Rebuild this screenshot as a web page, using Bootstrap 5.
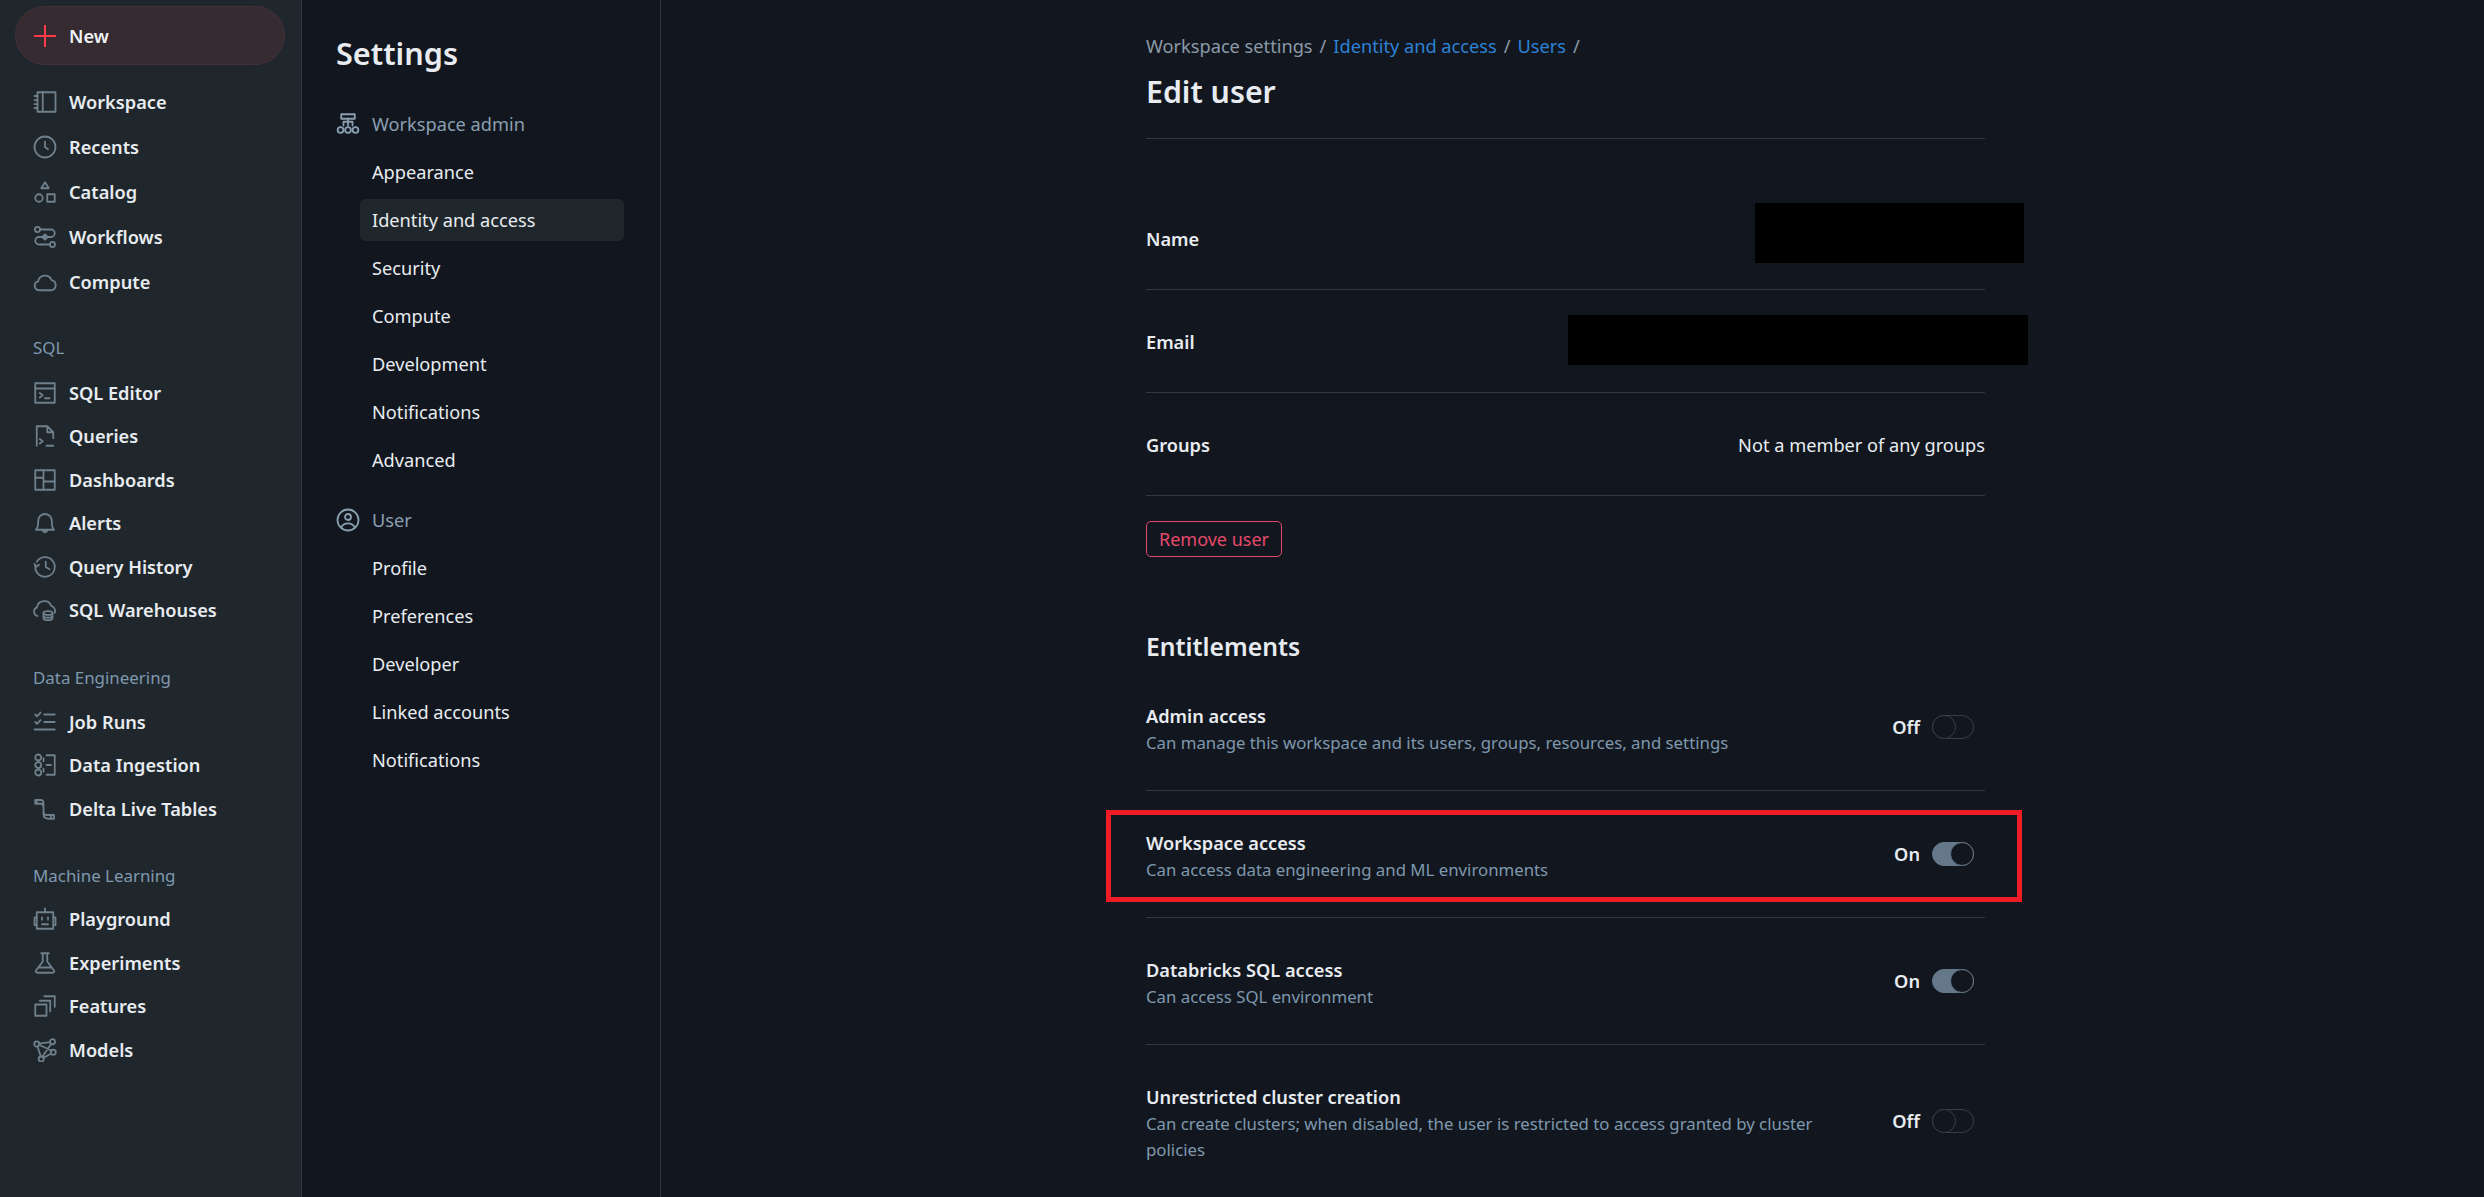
<!DOCTYPE html>
<html lang="en"><head><meta charset="utf-8"><title>Edit user</title>
<link href="https://cdn.jsdelivr.net/npm/bootstrap@5.3.0/dist/css/bootstrap.min.css" rel="stylesheet">
<style>
html,body{height:100%;overflow:hidden}
body{background:#12171f;color:#e8ecf0;font-family:"Noto Sans","Open Sans",sans-serif;font-size:18.2px;line-height:26px}
.shell{height:1197px}
.side{width:302px;flex:none;background:#1f272d;padding:6px 16px 0 15px;border-right:1px solid #2f3941}
.newbtn{height:59px;border-radius:30px;background:#352b30;border:1px solid #43313a;padding-left:17px;gap:12px;font-weight:600;color:#f0f3f6}
.navgroup{margin-top:14.5px}
.navrow{height:45px;padding-left:18px;gap:12px;font-weight:600;color:#e8ecf0;text-decoration:none}
.navrow.tight{height:43.5px}
.navrow svg,.sethead svg{width:24px;height:24px;flex:none;fill:none;stroke:#6f7f8b;stroke-width:1.2;stroke-linecap:round;stroke-linejoin:round}
.navlabel{height:24px;line-height:24px;margin:34px 0 10px 18px;color:#7f98ad;font-size:16.9px}
.navlabel.first{margin:31.5px 0 11px 18px}
.navlabel.last{margin-top:33px}
.setpanel{width:359px;flex:none;border-right:1px solid #2f3941;padding:31px 36px 0 34px}
.settitle{font-size:30.6px;line-height:44px;font-weight:600;margin:0 0 25px}
.sethead{height:48px;gap:12px;color:#8a9fb1}
.sethead svg{stroke:#8a9fb1}
.setgroup{margin-bottom:12px}
.setlist{gap:6px;padding:3px 0}
.setitem{display:block;height:42px;line-height:42px;margin-left:24px;padding-left:12px;border-radius:6px;color:#e8ecf0;text-decoration:none}
.setitem.cur{background:#1f272d}
.pagebody{width:839px;margin-left:485px;padding-top:33px;flex:none}
.crumbs{gap:7px;color:#8b9aa7;height:26px;white-space:nowrap}
.crumbs .crumblink{color:#2d81d6;text-decoration:none}
.pagetitle{font-size:30.3px;line-height:44px;font-weight:600;margin:11px 0 0;padding-bottom:24px;border-bottom:1px solid #2f3941}
.inforow{height:103px;border-bottom:1px solid #2f3941;padding-top:2px}
.inforow b{font-weight:600}
.removebtn{--bs-btn-color:#e5496b;--bs-btn-border-color:#e5496b;--bs-btn-font-size:18px;--bs-btn-line-height:24px;--bs-btn-padding-y:5px;--bs-btn-padding-x:8px;--bs-btn-border-radius:5px;margin-top:25px;height:36px;width:136px;white-space:nowrap}
.enttitle{font-size:24.7px;line-height:30px;font-weight:600;margin:75px 0 2px}
.entrow{padding:40px 11px 34px 0;border-bottom:1px solid #2f3941}
.entrow strong{display:block;font-weight:600;margin:-1px 0 1px}
.entdesc{color:#7f98ad;font-size:16.8px;display:block;max-width:700px}
.tglwrap{gap:12px;font-weight:600;flex:none;margin-bottom:6px}
.tgl{display:block;position:relative;width:42px;height:24px;border-radius:12px;border:1px solid #33404a}
.tgl::after{content:"";position:absolute;left:-1px;top:-1px;width:24px;height:24px;border-radius:50%;border:1px solid #33404a;background:#12171f}
.tgl.on{background:#64788a;border-color:#64788a}
.tgl.on::after{left:auto;right:-1px;border-color:#64788a;border-width:1.5px}
.mask{position:absolute;background:#000}
.mask.m1{left:1755px;top:203px;width:269px;height:60px}
.mask.m2{left:1568px;top:315px;width:460px;height:50px}
.redbox{position:absolute;left:1106px;top:810px;width:916px;height:92px;border:5px solid #ee1c25}
</style></head><body>
<div class="shell d-flex position-relative">
<aside class="side">
<a class="newbtn d-flex align-items-center text-decoration-none"><svg width="24" height="24" viewBox="0 0 24 24" fill="none" stroke="#ff3b47" stroke-width="2"><path d="M12 1v22M1 12h22"/></svg><span>New</span></a>
<div class="navgroup">
<a class="navrow d-flex align-items-center"><svg viewBox="0 0 16 16"><rect x="3" y="1.500" width="12" height="13"/><path d="M6.500 1.500v13M1 4h2M1 6.700h2M1 9.400h2M1 12h2"/></svg>Workspace</a>
<a class="navrow d-flex align-items-center"><svg viewBox="0 0 16 16"><circle cx="8" cy="8" r="7"/><path d="M8 4.500v3.500l2 1.500"/></svg>Recents</a>
<a class="navrow d-flex align-items-center"><svg viewBox="0 0 16 16"><path d="M8 1.500l2.500 4h-5z"/><circle cx="4" cy="12" r="2.500"/><rect x="9.500" y="9.500" width="5" height="5"/></svg>Catalog</a>
<a class="navrow d-flex align-items-center"><svg viewBox="0 0 16 16"><circle cx="3" cy="3" r="1.700"/><circle cx="13" cy="13" r="1.700"/><path d="M4.700 3H12a2.500 2.500 0 0 1 0 5H4a2.500 2.500 0 0 0 0 5h7.300"/><path d="M8 6.200L9.800 8 8 9.800 6.200 8z"/></svg>Workflows</a>
<a class="navrow d-flex align-items-center"><svg viewBox="0 0 16 16"><path d="M4 13.500a3 3 0 0 1-.6-5.900 4.700 4.700 0 0 1 9-.9 3.500 3.500 0 0 1 .1 6.800z"/></svg>Compute</a>
</div>
<div class="navlabel first">SQL</div>
<a class="navrow tight d-flex align-items-center"><svg viewBox="0 0 16 16"><rect x="1.500" y="1.500" width="13" height="13"/><path d="M1.500 5h13M4.500 8l2 1.500-2 1.500M8 11.500h3"/></svg>SQL Editor</a>
<a class="navrow tight d-flex align-items-center"><svg viewBox="0 0 16 16"><path d="M2.500 14.500v-13h7l4 4v4M9.500 1.500v4h4M4.500 10l2 1.500-2 1.500M9 14.500h4.500"/></svg>Queries</a>
<a class="navrow tight d-flex align-items-center"><svg viewBox="0 0 16 16"><rect x="1.500" y="1.500" width="13" height="13"/><path d="M7 1.500v13M7 9h7.500M1.500 6.500H7"/></svg>Dashboards</a>
<a class="navrow tight d-flex align-items-center"><svg viewBox="0 0 16 16"><path d="M2 12.500c1.500-1.500 1.500-3 1.500-6a4.500 4.500 0 0 1 9 0c0 3 0 4.500 1.500 6zM6.500 12.500a1.500 1.500 0 0 0 3 0"/></svg>Alerts</a>
<a class="navrow tight d-flex align-items-center"><svg viewBox="0 0 16 16"><path d="M2.500 4.500a6.500 6.500 0 1 1-1 3.500M1 6l1 2 2-1.500M8.500 4.500V8l2.500 1.500"/></svg>Query History</a>
<a class="navrow tight d-flex align-items-center"><svg viewBox="0 0 16 16"><path d="M3 12a3 3 0 0 1-.4-5.700 5 5 0 0 1 9.600-1 3.500 3.500 0 0 1 2.300 4.500"/><ellipse cx="10" cy="10" rx="3" ry="1.300"/><path d="M7 10v3.500c0 1.700 6 1.700 6 0V10M7 12c0 1.500 6 1.500 6 0"/></svg>SQL Warehouses</a>
<div class="navlabel">Data Engineering</div>
<a class="navrow tight d-flex align-items-center"><svg viewBox="0 0 16 16"><path d="M1.500 3l1.200 1.200 2.300-2.500M1.500 8l1.200 1.200L5 6.700M7.500 3h7M7.500 8h7M1 13h13.500"/></svg>Job Runs</a>
<a class="navrow tight d-flex align-items-center"><svg viewBox="0 0 16 16"><circle cx="3.500" cy="3" r="2"/><circle cx="3.500" cy="8" r="2"/><circle cx="3.500" cy="13" r="2"/><path d="M9 1.500h5.500v13H9M9 8h3M7 3.500v2M7 10.500v2"/></svg>Data Ingestion</a>
<a class="navrow tight d-flex align-items-center"><svg viewBox="0 0 16 16"><path d="M1.500 2h3.500c1.500 0 2 .8 2 2.200v5.600c0 1.400.5 2.200 2 2.200h5v2.500h-3.500c-1.500 0-3.500-.5-3.500-3V6.500c0-1.500-.5-2-2-2H1.500zM2.500 2v2.500M12 12v2.500"/></svg>Delta Live Tables</a>
<div class="navlabel last">Machine Learning</div>
<a class="navrow tight d-flex align-items-center"><svg viewBox="0 0 16 16"><rect x="2.500" y="3.500" width="11" height="11"/><path d="M8 1v2.500M2.500 7H1v5h1.500M13.500 7H15v5h-1.500M6 7v1.500M10 7v1.500M6 11.500h4"/></svg>Playground</a>
<a class="navrow tight d-flex align-items-center"><svg viewBox="0 0 16 16"><path d="M5.500 1.500h5M6.500 1.500v5.500L2 13c-.6.800 0 1.500 1 1.500h10c1 0 1.600-.7 1-1.500L9.500 7V1.500M4 11h8"/></svg>Experiments</a>
<a class="navrow tight d-flex align-items-center"><svg viewBox="0 0 16 16"><rect x="1.500" y="7" width="7.500" height="7.500"/><path d="M4.500 4.500H11.500V11.500M7.500 1.500h7v7"/></svg>Features</a>
<a class="navrow tight d-flex align-items-center"><svg viewBox="0 0 16 16"><circle cx="2.500" cy="4" r="1.700"/><circle cx="13" cy="2.500" r="1.700"/><circle cx="13.500" cy="9.500" r="1.700"/><circle cx="5.500" cy="14" r="1.700"/><path d="M4 4.500l8.500 4M4 3.700l7.500-1M3 5.700l2.200 6.600M12.200 3.800l-6 8.700M12 10.500l-5 2.700"/></svg>Models</a>
</aside>
<nav class="setpanel">
<h1 class="settitle">Settings</h1>
<div class="setgroup">
<div class="sethead d-flex align-items-center"><svg viewBox="0 0 16 16"><rect x="3.500" y="1.500" width="9" height="3"/><path d="M8 4.500V9M5 6.500h6M5 6.500V9M11 6.500V9"/><circle cx="3" cy="12" r="1.900"/><circle cx="8" cy="12" r="1.900"/><circle cx="13" cy="12" r="1.900"/></svg>Workspace admin</div>
<div class="setlist d-flex flex-column"><a class="setitem">Appearance</a><a class="setitem cur">Identity and access</a><a class="setitem">Security</a><a class="setitem">Compute</a><a class="setitem">Development</a><a class="setitem">Notifications</a><a class="setitem">Advanced</a></div>
</div>
<div class="setgroup">
<div class="sethead d-flex align-items-center"><svg viewBox="0 0 16 16"><circle cx="8" cy="8" r="7"/><circle cx="8" cy="6" r="2"/><path d="M3.500 13c.8-1.800 2.500-2.700 4.500-2.700s3.700.9 4.500 2.700"/></svg>User</div>
<div class="setlist d-flex flex-column"><a class="setitem">Profile</a><a class="setitem">Preferences</a><a class="setitem">Developer</a><a class="setitem">Linked accounts</a><a class="setitem">Notifications</a></div>
</div>
</nav>
<main class="pagebody">
<div class="crumbs d-flex align-items-center"><span>Workspace settings</span><span>/</span><a class="crumblink" href="#">Identity and access</a><span>/</span><a class="crumblink" href="#">Users</a><span>/</span></div>
<h1 class="pagetitle">Edit user</h1>
<div class="mt-5"></div>
<div class="inforow d-flex align-items-center"><b>Name</b></div>
<div class="inforow d-flex align-items-center"><b>Email</b></div>
<div class="inforow d-flex align-items-center justify-content-between"><b>Groups</b><span>Not a member of any groups</span></div>
<button class="btn btn-outline-danger removebtn d-flex align-items-center justify-content-center" type="button">Remove user</button>
<h2 class="enttitle">Entitlements</h2>
<div class="entrow d-flex align-items-center justify-content-between"><div><strong>Admin access</strong><span class="entdesc">Can manage this workspace and its users, groups, resources, and settings</span></div><div class="tglwrap d-flex align-items-center">Off<span class="tgl"></span></div></div>
<div class="entrow d-flex align-items-center justify-content-between"><div><strong>Workspace access</strong><span class="entdesc">Can access data engineering and ML environments</span></div><div class="tglwrap d-flex align-items-center">On<span class="tgl on"></span></div></div>
<div class="entrow d-flex align-items-center justify-content-between"><div><strong>Databricks SQL access</strong><span class="entdesc">Can access SQL environment</span></div><div class="tglwrap d-flex align-items-center">On<span class="tgl on"></span></div></div>
<div class="entrow d-flex align-items-center justify-content-between"><div><strong>Unrestricted cluster creation</strong><span class="entdesc">Can create clusters; when disabled, the user is restricted to access granted by cluster policies</span></div><div class="tglwrap d-flex align-items-center">Off<span class="tgl"></span></div></div>
</main>
<div class="mask m1"></div><div class="mask m2"></div><div class="redbox"></div>
</div>
<script src="https://cdn.jsdelivr.net/npm/bootstrap@5.3.0/dist/js/bootstrap.bundle.min.js"></script>
</body></html>
